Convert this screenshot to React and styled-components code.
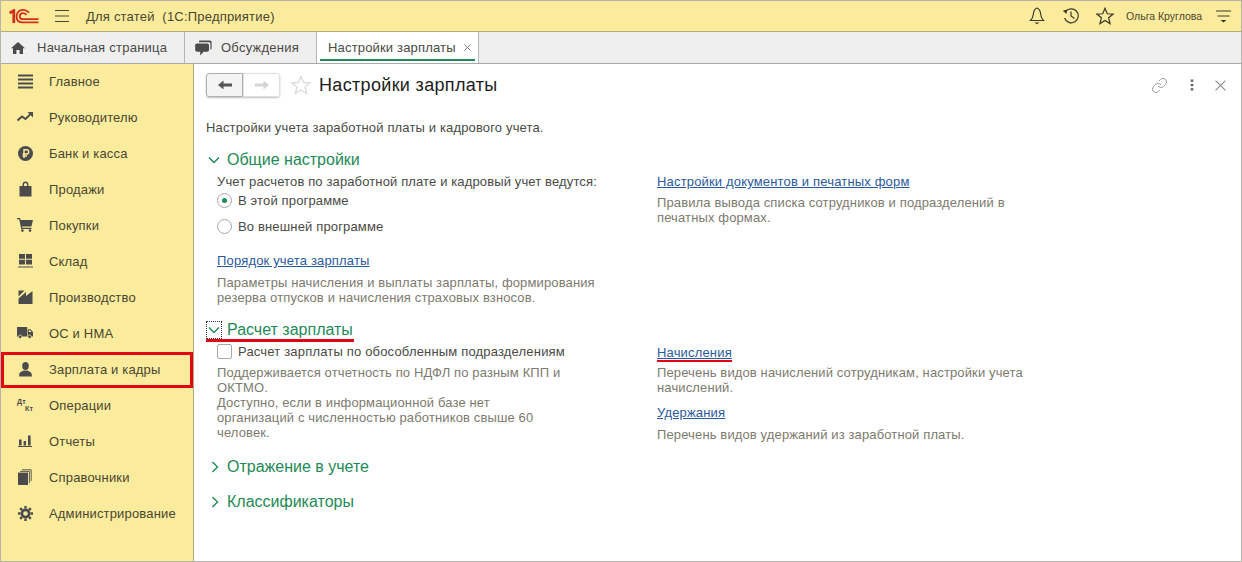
import styled, { createGlobalStyle } from 'styled-components';
import { Link as LinkGlyph } from 'lucide-react';

const YELLOW = "#fbec9d";
const GREEN = "#1d8a57";
const ICON = "#4b4b4b";

const GlobalStyle = createGlobalStyle`
    html, body {
        margin: 0;
        padding: 0;
        background: #fff;
    }
    body {
        font-family: "Liberation Sans", Arial, sans-serif;
        font-size: 13px;
        color: #4a4a45;
    }
`;

const LogoIcon = () => (
    <svg width="30" height="15" viewBox="0 0 30 15" fill="none" stroke="#d2301f">
        <path d="M0.5 4 L4.8 1.6 V14" strokeWidth="2.8" />
        <path d="M20 3.6 C18 1.4 16 0.9 14 0.9 C10 0.9 7.6 3.6 7.6 7.4 C7.6 11 10 13.4 14 13.4 H29.5" strokeWidth="1.8" />
        <path d="M17.4 6 C16.6 4.8 15.4 4.2 14 4.2 C12 4.2 10.8 5.6 10.8 7.4 C10.8 9.2 12 10.2 14 10.2 H29.5" strokeWidth="1.8" />
    </svg>
);

const MenuIcon = () => (
    <svg width="16" height="14" viewBox="0 0 16 14" stroke="#4a4530" strokeWidth="1.2">
        <path d="M1 1.5 H15 M1 7 H15 M1 12.5 H15" />
    </svg>
);

const BellIcon = () => (
    <svg width="16" height="18" viewBox="0 0 16 18" fill="none" stroke="#3d3a2a" strokeWidth="1.2">
        <path d="M8 1 C5 2 4.5 5 4.3 7.5 C4 10 3 12 1.5 13.5 H14.5 C13 12 12 10 11.7 7.5 C11.5 5 11 2 8 1 Z" />
        <path d="M5.5 15.6 H10.5 L8 17.2 Z" fill="#3d3a2a" stroke="none" />
    </svg>
);

const HistoryIcon = () => (
    <svg width="18" height="16" viewBox="0 0 18 16" fill="none" stroke="#3d3a2a" strokeWidth="1.2">
        <path d="M3.4 4 A7 7 0 1 1 2.6 10" />
        <path d="M0.8 2.8 L5 1.6 L4.6 6 Z" fill="#3d3a2a" stroke="none" />
        <path d="M9 3.5 V8 L12.5 10.5" />
    </svg>
);

const StarIcon = ({ size = 16, color = "#3d3a2a" }) => (
    <svg width={size} height={size} viewBox="0 0 16 16" fill="none" stroke={color} strokeWidth="1.1">
        <path d="M8 1.2 L10 6 L15.2 6.3 L11.2 9.6 L12.5 14.8 L8 12 L3.5 14.8 L4.8 9.6 L0.8 6.3 L6 6 Z" />
    </svg>
);

const SectionsIcon = () => (
    <svg width="15" height="13" viewBox="0 0 15 13" stroke="#3d3a2a" strokeWidth="1.1">
        <path d="M0 1 H15 M1.5 6 H13.5" />
        <path d="M4.5 10 H10.5 L7.5 12.6 Z" fill="#3d3a2a" stroke="none" />
    </svg>
);

const HomeIcon = () => (
    <svg width="14" height="12" viewBox="0 0 14 12" fill={ICON}>
        <path d="M7 0 L14 6.2 H12 V12 H8.6 V8 H5.4 V12 H2 V6.2 H0 Z" />
    </svg>
);

const ChatIcon = () => (
    <svg width="17" height="16" viewBox="0 0 17 16" fill={ICON}>
        <path d="M4.5 0.5 H15 Q16.6 0.5 16.6 2 V8.5 Q16.6 9.6 15.4 9.8 V3.4 Q15.4 2.3 14 2.3 H4 Q4 0.8 4.5 0.5 Z" />
        <path d="M2 3.4 H12.2 Q14 3.4 14 5 V10 Q14 11.7 12.2 11.7 H8.6 L5.2 15.4 V11.7 H2 Q0.2 11.7 0.2 10 V5 Q0.2 3.4 2 3.4 Z" />
    </svg>
);

const DotsIcon = () => (
    <svg width="4" height="12" viewBox="0 0 4 12" fill="#666">
        <rect x="0.7" y="0.5" width="2.6" height="2.4" />
        <rect x="0.7" y="4.8" width="2.6" height="2.4" />
        <rect x="0.7" y="9.1" width="2.6" height="2.4" />
    </svg>
);

const CloseIcon = ({ size = 10, color = "#8c8c8c" }) => (
    <svg width={size} height={size} viewBox="0 0 10 10" stroke={color} strokeWidth="1">
        <path d="M0.5 0.5 L9.5 9.5 M9.5 0.5 L0.5 9.5" />
    </svg>
);

const ArrowIcon = ({ flip, color }) => (
    <svg width="14" height="10" viewBox="0 0 14 10" fill={color} style={flip ? { transform: "scaleX(-1)" } : undefined}>
        <path d="M0 5 L5.5 0.6 V3.6 H14 V6.4 H5.5 V9.4 Z" />
    </svg>
);

const Chevron = ({ open }) => (
    <svg width="12" height="12" viewBox="0 0 12 12" fill="none" stroke={GREEN} strokeWidth="1.4">
        <path d={open ? "M1 3.5 L6 8.5 L11 3.5" : "M4.5 1 L9.5 6 L4.5 11"} />
    </svg>
);

const DebitCreditIcon = () => (
    <DebitCredit>
        <span>Дт</span>
        <span>Кт</span>
    </DebitCredit>
);

const navIcons = {
    main: (
        <svg width="15" height="15" viewBox="0 0 15 15" fill={ICON}>
            <path d="M0 0.5 H15 V2.5 H0 Z M0 4.5 H15 V6.5 H0 Z M0 8.5 H15 V10.5 H0 Z M0 12.5 H15 V14.5 H0 Z" />
        </svg>
    ),
    chief: (
        <svg width="16" height="10" viewBox="0 0 16 10" fill="none" stroke={ICON} strokeWidth="2">
            <path d="M0.5 8.5 L5 4.5 L8.5 7 L14 1.6" />
            <path d="M10.5 0 H16 V5.5 Z" fill={ICON} stroke="none" />
        </svg>
    ),
    bank: (
        <svg width="15" height="15" viewBox="0 0 15 15">
            <circle cx="7.5" cy="7.5" r="7.5" fill={ICON} />
            <path d="M6 12 V3.8 H8.6 A2.1 2.1 0 0 1 8.6 8 H4.6 M4.6 10 H9" fill="none" stroke={YELLOW} strokeWidth="1.4" />
        </svg>
    ),
    sales: (
        <svg width="13" height="16" viewBox="0 0 13 16" fill={ICON}>
            <path d="M0.5 5 H3.6 V3.4 A2.9 2.9 0 0 1 9.4 3.4 V5 H12.5 V15.5 H0.5 Z M5 5 H8 V3.4 A1.5 1.5 0 0 0 5 3.4 Z" fillRule="evenodd" />
        </svg>
    ),
    buy: (
        <svg width="16" height="14" viewBox="0 0 16 14" fill={ICON}>
            <path d="M0 0 H3 L3.6 2 H16 L14.4 8.6 H5 L5.3 9.8 H14.4 V11 H4.2 L2.2 1.2 H0 Z" />
            <circle cx="5.4" cy="12.6" r="1.3" />
            <circle cx="13" cy="12.6" r="1.3" />
        </svg>
    ),
    store: (
        <svg width="15" height="14" viewBox="0 0 15 14" fill={ICON}>
            <path d="M1 0 H7 V4.7 H1 Z M8 0 H14 V4.7 H8 Z M1 5.8 H7 V10.5 H1 Z M8 5.8 H14 V10.5 H8 Z M0 12.4 H15 V13.6 H0 Z" />
        </svg>
    ),
    factory: (
        <svg width="15" height="14" viewBox="0 0 15 14" fill={ICON}>
            <path d="M0.5 0.5 H6.5 L0.5 6.5 Z" />
            <path d="M0.5 8.5 L8 2 V6 L14.5 1 V14 H0.5 Z" />
        </svg>
    ),
    truck: (
        <svg width="16" height="12" viewBox="0 0 16 12" fill={ICON}>
            <path d="M0 0 H10.2 V9.4 H0 Z M10.8 2.2 H13.4 L16 5 V9.4 H10.8 Z" />
            <path d="M11.8 3.2 H13 L14.6 5 H11.8 Z" fill={YELLOW} />
            <circle cx="3.2" cy="9.8" r="1.8" stroke={YELLOW} strokeWidth="0.7" />
            <circle cx="12.6" cy="9.8" r="1.8" stroke={YELLOW} strokeWidth="0.7" />
        </svg>
    ),
    person: (
        <svg width="13" height="15" viewBox="0 0 13 15" fill={ICON}>
            <ellipse cx="6.5" cy="4" rx="3.3" ry="3.9" />
            <path d="M0.2 14.5 V12.6 C0.2 10.4 2.8 9.4 4.6 8.6 H8.4 C10.2 9.4 12.8 10.4 12.8 12.6 V14.5 Z" />
        </svg>
    ),
    reports: (
        <svg width="14" height="12" viewBox="0 0 14 12" fill={ICON}>
            <path d="M1 4.5 H3.6 V10.4 H1 Z M5.6 6 H8 V10.4 H5.6 Z M10 0.5 H12.6 V10.4 H10 Z M0 11 H14 V12 H0 Z" />
        </svg>
    ),
    books: (
        <svg width="14" height="16" viewBox="0 0 14 16" fill={ICON}>
            <path d="M0 3.6 H10 V16 H0 Z" />
            <path d="M2 2.4 H11.4 V14 M4 0.8 H13.2 V12" fill="none" stroke={ICON} strokeWidth="0.9" />
        </svg>
    ),
    gear: (
        <svg width="15" height="15" viewBox="0 0 15 15">
            <circle cx="7.5" cy="7.5" r="3.6" fill="none" stroke={ICON} strokeWidth="2.6" />
            <path d="M7.5 0 V15 M0 7.5 H15 M2.2 2.2 L12.8 12.8 M12.8 2.2 L2.2 12.8" stroke={ICON} strokeWidth="2.4" strokeDasharray="2.6 9.8 2.6" />
        </svg>
    ),
};

const navItems = [
    { id: 1, icon: navIcons.main, text: "Главное" },
    { id: 2, icon: navIcons.chief, text: "Руководителю" },
    { id: 3, icon: navIcons.bank, text: "Банк и касса" },
    { id: 4, icon: navIcons.sales, text: "Продажи" },
    { id: 5, icon: navIcons.buy, text: "Покупки" },
    { id: 6, icon: navIcons.store, text: "Склад" },
    { id: 7, icon: navIcons.factory, text: "Производство" },
    { id: 8, icon: navIcons.truck, text: "ОС и НМА" },
    { id: 9, icon: navIcons.person, text: "Зарплата и кадры", marked: true },
    { id: 10, icon: <DebitCreditIcon />, text: "Операции" },
    { id: 11, icon: navIcons.reports, text: "Отчеты" },
    { id: 12, icon: navIcons.books, text: "Справочники" },
    { id: 13, icon: navIcons.gear, text: "Администрирование" },
];

const App = () => {
    return (
        <>
            <GlobalStyle />
            <Page>
                <TopBar>
                    <LogoBox><LogoIcon /></LogoBox>
                    <MenuBox><MenuIcon /></MenuBox>
                    <AppTitle>Для статей&nbsp; (1С:Предприятие)</AppTitle>
                    <TopTools>
                        <ToolBox><BellIcon /></ToolBox>
                        <ToolBox><HistoryIcon /></ToolBox>
                        <ToolBox><StarIcon size={18} /></ToolBox>
                        <UserName>Ольга Круглова</UserName>
                        <SectionsBox><SectionsIcon /></SectionsBox>
                    </TopTools>
                </TopBar>
                <TabBar>
                    <Tab $width={184}>
                        <TabIcon><HomeIcon /></TabIcon>
                        Начальная страница
                    </Tab>
                    <Tab $width={132}>
                        <TabIcon><ChatIcon /></TabIcon>
                        Обсуждения
                    </Tab>
                    <ActiveTab>
                        Настройки зарплаты
                        <CloseIcon size={7} color="#555" />
                    </ActiveTab>
                </TabBar>
                <Body>
                    <SideNav>
                        {navItems.map((item) =>
                            <NavItem key={item.id} $marked={item.marked}>
                                <NavIcon>{item.icon}</NavIcon>
                                {item.text}
                            </NavItem>
                        )}
                    </SideNav>
                    <Content>
                        <FormHeader>
                            <NavButtons>
                                <NavButton $active><ArrowIcon color="#555" /></NavButton>
                                <NavButton><ArrowIcon flip color="#d4d4d4" /></NavButton>
                            </NavButtons>
                            <FormStar><StarIcon size={20} color="#dcdcdc" /></FormStar>
                            <FormTitle>Настройки зарплаты</FormTitle>
                            <FormTools>
                                <LinkGlyph size={17} color="#9c9c9c" strokeWidth={1.4} />
                                <DotsIcon />
                                <CloseIcon size={11} />
                            </FormTools>
                        </FormHeader>
                        <Intro>Настройки учета заработной платы и кадрового учета.</Intro>

                        <GroupTitle $top={15}>
                            <Chevron open />
                            Общие настройки
                        </GroupTitle>
                        <Columns>
                            <Column>
                                <Label>Учет расчетов по заработной плате и кадровый учет ведутся:</Label>
                                <RadioRow>
                                    <Radio $checked />
                                    В этой программе
                                </RadioRow>
                                <RadioRow>
                                    <Radio />
                                    Во внешней программе
                                </RadioRow>
                                <LinkText $top={14}>Порядок учета зарплаты</LinkText>
                                <Hint $top={7} $width={385}>
                                    Параметры начисления и выплаты зарплаты, формирования
                                    резерва отпусков и начисления страховых взносов.
                                </Hint>
                            </Column>
                            <Column>
                                <LinkText $top={4}>Настройки документов и печатных форм</LinkText>
                                <Hint $top={6} $width={370}>
                                    Правила вывода списка сотрудников и подразделений в
                                    печатных формах.
                                </Hint>
                            </Column>
                        </Columns>

                        <GroupTitle $top={15} $marked>
                            <FocusBox><Chevron open /></FocusBox>
                            Расчет зарплаты
                        </GroupTitle>
                        <Columns>
                            <Column>
                                <CheckRow>
                                    <CheckBox />
                                    Расчет зарплаты по обособленным подразделениям
                                </CheckRow>
                                <Hint $top={5} $width={350}>
                                    Поддерживается отчетность по НДФЛ по разным КПП и
                                    ОКТМО.<br />
                                    Доступно, если в информационной базе нет
                                    организаций с численностью работников свыше 60
                                    человек.
                                </Hint>
                            </Column>
                            <Column>
                                <MarkedLink $top={5}>Начисления</MarkedLink>
                                <Hint $top={5} $width={385}>
                                    Перечень видов начислений сотрудникам, настройки учета
                                    начислений.
                                </Hint>
                                <LinkText $top={10}>Удержания</LinkText>
                                <Hint $top={7} $width={385}>Перечень видов удержаний из заработной платы.</Hint>
                            </Column>
                        </Columns>

                        <GroupTitle $top={15}>
                            <Chevron />
                            Отражение в учете
                        </GroupTitle>
                        <GroupTitle $top={15}>
                            <Chevron />
                            Классификаторы
                        </GroupTitle>
                    </Content>
                </Body>
            </Page>
        </>
    )
}

const Page = styled.div`
    box-sizing: border-box;
    width: 1242px;
    height: 562px;
    display: flex;
    flex-direction: column;
    border: 1px solid #b5b5a8;
    overflow: hidden;
`;

const TopBar = styled.div`
    box-sizing: border-box;
    height: 31px;
    flex: none;
    display: flex;
    align-items: center;
    background-color: ${YELLOW};
    border-bottom: 1px solid #b3ab7c;
`;

const LogoBox = styled.div`
    width: 45px;
    padding-left: 8px;
    box-sizing: border-box;
    display: flex;
`;

const MenuBox = styled.div`
    width: 40px;
    padding-left: 8px;
    box-sizing: border-box;
    display: flex;
`;

const AppTitle = styled.div`
    font-size: 13px;
    letter-spacing: 0.21px;
    color: #4a4530;
`;

const TopTools = styled.div`
    margin-left: auto;
    display: flex;
    align-items: center;
`;

const ToolBox = styled.div`
    width: 34px;
    display: flex;
    justify-content: center;
`;

const UserName = styled.div`
    font-size: 10.5px;
    color: #4a4530;
    margin-left: 4px;
    width: 90px;
`;

const SectionsBox = styled.div`
    display: flex;
    margin-right: 10px;
`;

const TabBar = styled.div`
    box-sizing: border-box;
    height: 32px;
    flex: none;
    display: flex;
    background-color: #efefef;
    border-bottom: 1px solid #a9a9a9;
`;

const Tab = styled.div`
    box-sizing: border-box;
    width: ${(props) => props.$width}px;
    display: flex;
    align-items: center;
    font-size: 13px;
    letter-spacing: 0.25px;
    color: #4a4a45;
    border-right: 1px solid #b5b5b5;
`;

const TabIcon = styled.span`
    width: 36px;
    padding-left: 10px;
    box-sizing: border-box;
    display: flex;
`;

const ActiveTab = styled.div`
    box-sizing: border-box;
    width: 162px;
    padding: 0 7px 0 11px;
    display: flex;
    align-items: center;
    justify-content: space-between;
    font-size: 13px;
    letter-spacing: 0.17px;
    color: #4a4a45;
    background-color: #fff;
    border-right: 1px solid #b5b5b5;
    position: relative;
    &::after {
        content: "";
        position: absolute;
        left: 3px;
        right: 3px;
        bottom: 2px;
        height: 2px;
        background-color: ${GREEN};
    }
`;

const Body = styled.div`
    flex: 1;
    display: flex;
    min-height: 0;
`;

const SideNav = styled.nav`
    box-sizing: border-box;
    width: 193px;
    flex: none;
    background-color: ${YELLOW};
    border-right: 1px solid #b3ab7c;
`;

const NavItem = styled.div`
    box-sizing: border-box;
    height: 36px;
    display: flex;
    align-items: center;
    padding-bottom: 2px;
    letter-spacing: 0.17px;
    color: #4a4530;
    ${(props) => props.$marked && `
        box-shadow: inset 0 0 0 3px #e30613;
    `}
`;

const NavIcon = styled.span`
    width: 48px;
    flex: none;
    display: flex;
    justify-content: center;
`;

const DebitCredit = styled.span`
    display: flex;
    flex-direction: column;
    width: 16px;
    font-size: 7px;
    font-weight: 700;
    line-height: 7px;
    color: ${ICON};
    span:last-child {
        align-self: flex-end;
    }
`;

const Content = styled.main`
    flex: 1;
    min-width: 0;
    padding: 8px 12px 0 12px;
    background-color: #fff;
`;

const FormHeader = styled.div`
    height: 26px;
    display: flex;
    align-items: center;
`;

const NavButtons = styled.div`
    display: flex;
    height: 24px;
    border-radius: 3px;
    box-shadow: 0 1px 2px rgba(0, 0, 0, 0.25);
`;

const NavButton = styled.div`
    box-sizing: border-box;
    width: 37px;
    display: flex;
    align-items: center;
    justify-content: center;
    background-color: ${(props) => props.$active ? "#f4f4f4" : "#fff"};
    border: 1px solid ${(props) => props.$active ? "#b0b0b0" : "#dedede"};
    border-radius: ${(props) => props.$active ? "3px 0 0 3px" : "0 3px 3px 0"};
`;

const FormStar = styled.div`
    width: 20px;
    margin: 0 8px 0 11px;
    display: flex;
`;

const FormTitle = styled.h1`
    margin: 0;
    font-size: 18px;
    font-weight: 400;
    letter-spacing: 0.33px;
    color: #1c1c1c;
`;

const FormTools = styled.div`
    margin-left: auto;
    width: 78px;
    padding-right: 3px;
    box-sizing: border-box;
    display: flex;
    align-items: center;
    justify-content: space-between;
`;

const Intro = styled.p`
    margin: 22px 0 0 0;
    font-size: 13px;
    letter-spacing: 0.15px;
    line-height: 15px;
    color: #4a4a45;
`;

const GroupTitle = styled.div`
    display: flex;
    align-items: center;
    gap: 7px;
    height: 20px;
    width: fit-content;
    margin-top: ${(props) => props.$top}px;
    margin-left: 2px;
    font-size: 16px;
    color: ${GREEN};
    position: relative;
    ${(props) => props.$marked && `
        &::after {
            content: "";
            position: absolute;
            left: -2px;
            right: -1px;
            bottom: -2px;
            height: 3px;
            background-color: #e30613;
        }
    `}
`;

const FocusBox = styled.span`
    display: flex;
    margin: 0 -2px;
    padding: 3px 2px;
    outline: 1px dotted #333;
    outline-offset: -1px;
`;

const Columns = styled.div`
    display: grid;
    grid-template-columns: 440px 380px;
    padding-left: 11px;
`;

const Column = styled.div`
    display: flex;
    flex-direction: column;
    align-items: flex-start;
`;

const Label = styled.div`
    font-size: 13px;
    line-height: 15px;
    margin: 4px 0 -2px 0;
    letter-spacing: 0.13px;
`;

const RadioRow = styled.div`
    display: flex;
    align-items: center;
    gap: 6px;
    height: 26px;
    font-size: 13px;
    letter-spacing: 0.15px;
`;

const Radio = styled.span`
    box-sizing: border-box;
    width: 15px;
    height: 15px;
    border-radius: 50%;
    border: 1px solid #a8a8a8;
    background-color: #fff;
    display: flex;
    align-items: center;
    justify-content: center;
    &::after {
        content: "";
        width: 5px;
        height: 5px;
        border-radius: 50%;
        background-color: ${(props) => props.$checked ? GREEN : "transparent"};
    }
`;

const CheckRow = styled.div`
    display: flex;
    align-items: center;
    gap: 6px;
    height: 18px;
    margin-top: 2px;
    font-size: 13px;
    letter-spacing: 0.18px;
`;

const CheckBox = styled.span`
    box-sizing: border-box;
    width: 15px;
    height: 15px;
    border-radius: 2px;
    border: 1px solid #a8a8a8;
    background-color: #fff;
`;

const LinkText = styled.a`
    margin-top: ${(props) => props.$top}px;
    font-size: 13px;
    line-height: 15px;
    letter-spacing: 0.17px;
    color: #2a5a9c;
    text-decoration: underline;
`;

const MarkedLink = styled(LinkText)`
    position: relative;
    &::after {
        content: "";
        position: absolute;
        left: 0;
        right: 0;
        bottom: -2px;
        height: 2px;
        background-color: #e30613;
    }
`;

const Hint = styled.p`
    margin: ${(props) => props.$top}px 0 0 0;
    max-width: ${(props) => props.$width}px;
    font-size: 13px;
    line-height: 15px;
    letter-spacing: 0.13px;
    color: #7d7a6e;
`;

export default App;
